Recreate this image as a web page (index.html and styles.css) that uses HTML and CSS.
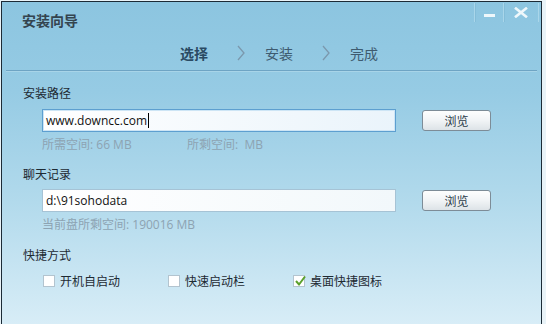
FILE: index.html
```html
<!DOCTYPE html>
<html>
<head>
<meta charset="utf-8">
<link rel="stylesheet" href="styles.css">
</head>
<body>
<div class="window">
  <div class="titlebar">
    <div class="title">安装向导</div>
    <div class="controls">
      <div class="ctl ctl-min"><span class="dash"></span></div>
      <div class="ctl ctl-close">
        <svg width="14" height="11" viewBox="0 0 14 11"><path d="M2 1.5 L12 9.5 M12 1.5 L2 9.5" stroke="#eef7fb" stroke-width="2.6" stroke-linecap="square"/></svg>
      </div>
    </div>
  </div>
  <div class="steps">
    <span class="step active">选择</span>
    <svg class="chev" width="8" height="16" viewBox="0 0 8 16"><path d="M1 1 L7 8 L1 15" fill="none" stroke="#7b98ad" stroke-width="1.3"/></svg>
    <span class="step">安装</span>
    <svg class="chev" width="8" height="16" viewBox="0 0 8 16"><path d="M1 1 L7 8 L1 15" fill="none" stroke="#7b98ad" stroke-width="1.3"/></svg>
    <span class="step">完成</span>
  </div>
  <div class="divider"></div>
  <div class="content">
    <div class="label">安装路径</div>
    <div class="row">
      <div class="input focus">www.downcc.com<span class="caret"></span></div>
      <div class="btn">浏览</div>
    </div>
    <div class="info"><span class="info-a">所需空间: 66 MB</span><span>所剩空间:&nbsp; MB</span></div>

    <div class="label l2">聊天记录</div>
    <div class="row r2">
      <div class="input">d:\91sohodata</div>
      <div class="btn">浏览</div>
    </div>
    <div class="info"><span>当前盘所剩空间: 190016 MB</span></div>

    <div class="label l3">快捷方式</div>
    <div class="checks">
      <div class="check"><span class="box"></span>开机自启动</div>
      <div class="check"><span class="box"></span>快速启动栏</div>
      <div class="check"><span class="box"><svg width="12" height="12" viewBox="0 0 12 12"><path d="M2 6 L5 9.5 L11 1.5" fill="none" stroke="#5aa02c" stroke-width="2"/></svg></span>桌面快捷图标</div>
    </div>
  </div>
</div>
</body>
</html>
```

FILE: styles.css
```css
html, body {
  margin: 0;
  padding: 0;
}
body {
  background: #e9f3f8;
  width: 546px;
  height: 324px;
  overflow: hidden;
  font-family: "Noto Sans CJK SC", sans-serif;
}
.window {
  margin: 1px 0 0 1px;
  width: 541px;
  height: 323px;
  overflow: hidden;
  border: 1px solid #1c2b36;
  border-bottom: none;
  background: linear-gradient(180deg, #8cc5e0 0px, #96cbe4 90px, #b2daec 200px, #d8edf7 323px);
  box-sizing: border-box;
}
.titlebar {
  display: flex;
  height: 34px;
}
.title {
  padding: 8px 0 0 20px;
  font-size: 14px;
  line-height: 20px;
  font-weight: bold;
  color: #34444f;
}
.controls {
  margin-left: auto;
  margin-right: 2px;
  display: flex;
  height: 19px;
  margin-top: 1px;
}
.ctl {
  width: 28px;
  height: 19px;
  border-left: 1px solid #a9d6ea;
  box-shadow: inset 1px 0 0 #84bdd8;
  display: flex;
  align-items: center;
  justify-content: center;
}
.ctl-close {
  width: 34px;
  border-right: 1px solid #a9d6ea;
}
.dash {
  display: block;
  width: 11px;
  height: 3px;
  background: #eef7fb;
  margin-top: 6px;
}
.steps {
  display: flex;
  align-items: center;
  padding-left: 178px;
  height: 34px;
}
.step {
  font-size: 14px;
  line-height: 20px;
  color: #3e5b70;
}
.step.active {
  font-weight: bold;
  color: #2a4a63;
}
.chev {
  margin: 0 20px 0 29px;
}
.divider {
  margin: 0 4px 0 4px;
  height: 1px;
  background: #6ea4c4;
  border-bottom: 1px solid #a8d4e8;
}
.content {
  padding-left: 21px;
  padding-top: 13px;
}
.label {
  font-size: 12px;
  line-height: 16px;
  color: #1e2a33;
}
.row {
  display: flex;
  align-items: center;
  margin-top: 8px;
  margin-left: 19px;
}
.r2 {
  margin-top: 7px;
}
.input {
  width: 354px;
  height: 23px;
  box-sizing: border-box;
  border: 1px solid #a6c3d5;
  background: linear-gradient(90deg, #ffffff, #f2f8fb);
  font-family: "Open Sans", "Noto Sans CJK SC", sans-serif;
  font-size: 12px;
  line-height: 20px;
  padding-left: 3px;
  color: #111;
  display: flex;
  align-items: center;
}
.input.focus {
  border: 1px solid #5d9fd0;
  box-shadow: inset 0 0 0 1px #cde5f5;
  background: linear-gradient(90deg, #ffffff, #eaf4fb);
}
.caret {
  display: inline-block;
  width: 1px;
  height: 15px;
  background: #000;
  margin-left: 1px;
}
.btn {
  margin-left: 26px;
  width: 69px;
  height: 21px;
  box-sizing: border-box;
  border: 1px solid #7d8c97;
  border-radius: 3px;
  background: linear-gradient(180deg, #fdfefe 0%, #f1f4f6 50%, #dde3e7 100%);
  font-size: 12px;
  line-height: 19px;
  text-align: center;
  color: #2b3b48;
}
.info {
  display: flex;
  margin-top: 5px;
  margin-left: 19px;
  font-family: "Open Sans", "Noto Sans CJK SC", sans-serif;
  font-size: 12px;
  line-height: 16px;
  color: #8da3b2;
}
.info-a {
  width: 145px;
}
.l2 {
  margin-top: 13px;
}
.l3 {
  margin-top: 14px;
}
.checks {
  display: grid;
  grid-template-columns: 125px 125px 125px;
  margin-top: 10px;
  margin-left: 20px;
}
.check {
  display: flex;
  align-items: center;
  font-size: 12px;
  line-height: 16px;
  color: #1e2a33;
}
.box {
  width: 12px;
  height: 12px;
  box-sizing: border-box;
  border: 1px solid #b3c4cf;
  background: #fff;
  margin-right: 5px;
  position: relative;
}
.box svg {
  position: absolute;
  left: 0;
  top: -1px;
}
```
